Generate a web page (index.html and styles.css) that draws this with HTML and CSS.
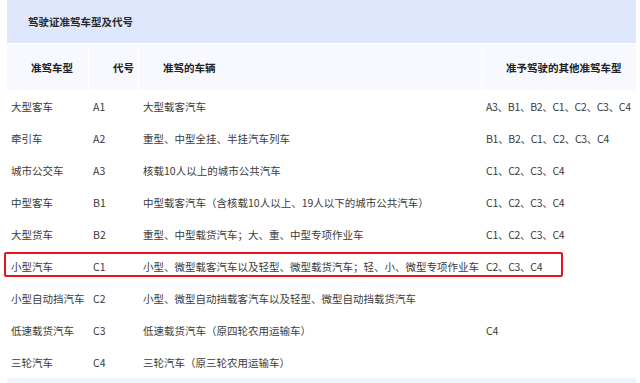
FILE: index.html
```html
<!DOCTYPE html>
<html lang="zh-CN">
<head>
<meta charset="utf-8">
<title>驾驶证准驾车型及代号</title>
<link rel="stylesheet" href="styles.css">
</head>
<body>
<div class="page">
  <div class="title">驾驶证准驾车型及代号</div>
  <div class="row head">
    <div class="cell">准驾车型</div>
    <div class="cell">代号</div>
    <div class="cell">准驾的车辆</div>
    <div class="cell">准予驾驶的其他准驾车型</div>
  </div>
  <div class="row"><div class="cell">大型客车</div><div class="cell">A1</div><div class="cell">大型载客汽车</div><div class="cell codes">A3、B1、B2、C1、C2、C3、C4</div></div>
  <div class="row"><div class="cell">牵引车</div><div class="cell">A2</div><div class="cell">重型、中型全挂、半挂汽车列车</div><div class="cell codes">B1、B2、C1、C2、C3、C4</div></div>
  <div class="row"><div class="cell">城市公交车</div><div class="cell">A3</div><div class="cell">核载10人以上的城市公共汽车</div><div class="cell codes">C1、C2、C3、C4</div></div>
  <div class="row"><div class="cell">中型客车</div><div class="cell">B1</div><div class="cell">中型载客汽车（含核载10人以上、19人以下的城市公共汽车）</div><div class="cell codes">C1、C2、C3、C4</div></div>
  <div class="row"><div class="cell">大型货车</div><div class="cell">B2</div><div class="cell">重型、中型载货汽车；大、重、中型专项作业车</div><div class="cell codes">C1、C2、C3、C4</div></div>
  <div class="row"><div class="cell">小型汽车</div><div class="cell">C1</div><div class="cell">小型、微型载客汽车以及轻型、微型载货汽车；轻、小、微型专项作业车</div><div class="cell codes">C2、C3、C4</div></div>
  <div class="row"><div class="cell">小型自动挡汽车</div><div class="cell">C2</div><div class="cell">小型、微型自动挡载客汽车以及轻型、微型自动挡载货汽车</div><div class="cell codes"></div></div>
  <div class="row"><div class="cell">低速载货汽车</div><div class="cell">C3</div><div class="cell">低速载货汽车（原四轮农用运输车）</div><div class="cell codes">C4</div></div>
  <div class="row"><div class="cell">三轮汽车</div><div class="cell">C4</div><div class="cell">三轮汽车（原三轮农用运输车）</div><div class="cell codes"></div></div>
  <div class="foot"></div>
  <div class="highlight"></div>
</div>
</body>
</html>
```
FILE: styles.css
```css
html, body {
  margin: 0;
  padding: 0;
  background: #ffffff;
}
body {
  font-family: "Noto Sans CJK SC", "Noto Sans", sans-serif;
  font-size: 10.5px;
  color: #3b3b3b;
}
.page {
  position: relative;
  width: 629px;
  padding-left: 7px;
  overflow: hidden;
  height: 383px;
}
.title {
  height: 43px;
  display: flex;
  align-items: center;
  padding-left: 21px;
  background: #dfe7fc;
  font-weight: bold;
  color: #2a2a2a;
}
.row {
  display: grid;
  grid-template-columns: 81px 49px 342px 154px;
  column-gap: 1px;
  height: 32px;
  align-items: center;
  white-space: nowrap;
}
.row .cell {
  padding-left: 4px;
  overflow: visible;
}
.row .codes {
  letter-spacing: -0.3px;
}
.row.head {
  margin-top: 1px;
  height: 46px;
  align-items: stretch;
}
.row.head .cell {
  background: #f7f9ff;
  padding-left: 24px;
  display: flex;
  align-items: center;
  font-weight: bold;
  color: #222222;
}
.foot {
  height: 10px;
  background: #edf4fc;
}
.highlight {
  position: absolute;
  left: 4px;
  top: 252px;
  width: 559px;
  height: 25px;
  box-sizing: border-box;
  border: 2px solid #e3161d;
  border-radius: 2px;
}
```
